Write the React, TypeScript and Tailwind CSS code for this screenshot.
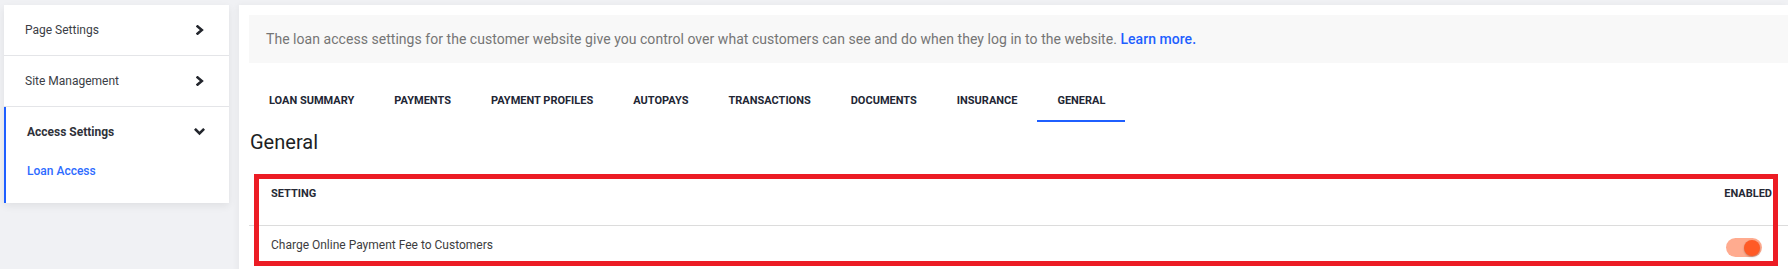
import React from "react";

const ChevronRight = () => (
  <svg width="8" height="10" viewBox="0 0 8 10" fill="none">
    <path d="M1.6 1.4 L5.8 5 L1.6 8.6" stroke="#23262d" strokeWidth="2.6" strokeLinecap="square" strokeLinejoin="miter" />
  </svg>
);

const ChevronDown = () => (
  <svg width="11" height="8" viewBox="0 0 11 8" fill="none">
    <path d="M1.8 1.8 L5.5 5.4 L9.2 1.8" stroke="#23262d" strokeWidth="2.6" strokeLinecap="square" strokeLinejoin="miter" />
  </svg>
);

const tabs = [
  "LOAN SUMMARY",
  "PAYMENTS",
  "PAYMENT PROFILES",
  "AUTOPAYS",
  "TRANSACTIONS",
  "DOCUMENTS",
  "INSURANCE",
  "GENERAL",
];

export default function App() {
  return (
    <div
      className="w-[1788px] h-[269px] overflow-hidden bg-[#f0f1f4] flex items-start gap-[10px] pt-[5px] pl-[4px]"
      style={{ fontFamily: "Roboto, 'Liberation Sans', sans-serif" }}
    >
      {/* Sidebar */}
      <div className="w-[225px] shrink-0 bg-white shadow-[0_3px_8px_rgba(0,0,0,0.07)]">
        <div className="h-[51px] flex items-center justify-between pl-[21px] pr-[25px] border-b border-[#e4e5e8]">
          <span className="text-[12px] text-[#3b3e46]">Page Settings</span>
          <ChevronRight />
        </div>
        <div className="h-[51px] flex items-center justify-between pl-[21px] pr-[25px] border-b border-[#e4e5e8]">
          <span className="text-[12px] text-[#3b3e46]">Site Management</span>
          <ChevronRight />
        </div>
        <div className="border-l-2 border-[#1f5fff] pl-[21px] pr-[24px] pb-[24px]">
          <div className="h-[50px] flex items-center justify-between">
            <span className="text-[12px] font-bold text-[#2f323a]">Access Settings</span>
            <ChevronDown />
          </div>
          <div className="mt-[6px] text-[12px] leading-[16px] font-medium text-[#2d6bff]">Loan Access</div>
        </div>
      </div>

      {/* Main */}
      <div className="flex-1 h-[300px] bg-white pt-[10px] pl-[10px] shadow-[-2px_0_6px_rgba(0,0,0,0.04)]">
        <div className="h-[48px] bg-[#f8f8f8] flex items-center pl-[17px]">
          <p className="text-[14px] tracking-[0.04px] text-[#757575]">
            The loan access settings for the customer website give you control over what customers can see and do when they log in to the website.{" "}
            <span className="text-[#1f5fff] font-medium">Learn more.</span>
          </p>
        </div>

        <div className="mt-[15px] flex">
          {tabs.map((t) => (
            <div
              key={t}
              className={
                t === "GENERAL"
                  ? "h-[44px] px-[20px] pt-[4px] flex items-center border-b-2 border-[#1f5fff] text-[11px] font-bold text-[#222634]"
                  : "h-[44px] px-[20px] pt-[4px] flex items-center border-b-2 border-transparent text-[11px] font-bold text-[#222634]"
              }
            >
              {t}
            </div>
          ))}
        </div>

        <h2 className="mt-[8px] ml-[1px] text-[20px] leading-[24px] text-[#1d1f24]">General</h2>

        <div className="relative mt-[21px]">
          <div className="h-[51px] flex items-start justify-between pt-[13px] pl-[22px] pr-[16px] border-b border-[#dcdcdc]">
            <span className="text-[11px] leading-[12px] font-bold text-[#262a35]">SETTING</span>
            <span className="text-[11px] leading-[12px] font-bold text-[#262a35]">ENABLED</span>
          </div>
          <div className="h-[44px] flex items-start justify-between pt-[11px] pl-[22px] pr-[26px]">
            <span className="text-[12px] leading-[16px] text-[#3d3d40]">Charge Online Payment Fee to Customers</span>
            <div className="mt-[1px] w-[36px] h-[19px] rounded-full bg-[#ffab8f] flex items-center justify-end pr-[2px]">
              <div className="w-[16px] h-[16px] rounded-full bg-[#ff5a26] shadow-[0_1px_2px_rgba(0,0,0,0.25)]" />
            </div>
          </div>

          {/* annotation box */}
          <div className="absolute left-[5px] top-[-1px] w-[1524px] h-[92px] border-[5px] border-[#ec1c24] pointer-events-none" />
        </div>
      </div>
    </div>
  );
}
